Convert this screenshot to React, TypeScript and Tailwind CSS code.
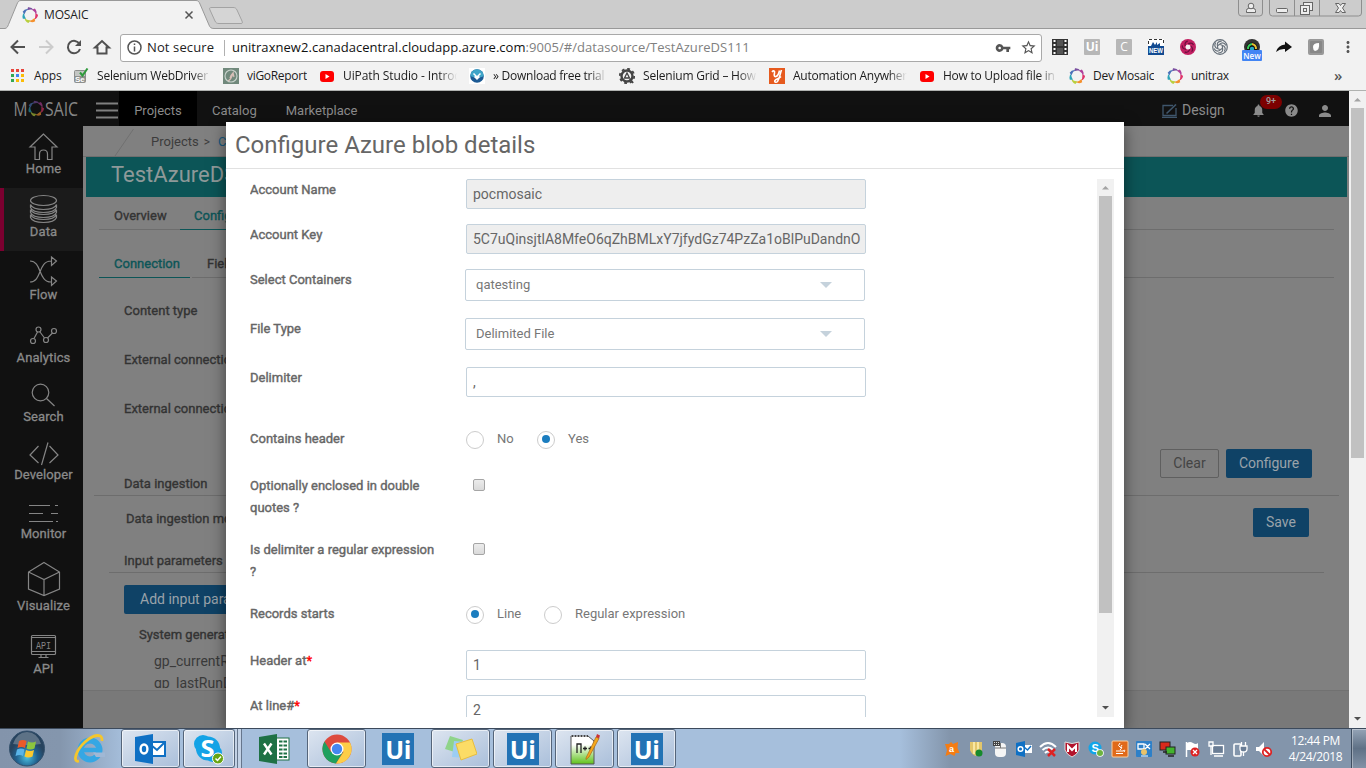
import React from "react";
import { MdNotifications, MdHelp, MdPerson, MdVpnKey, MdStarBorder, MdMoreVert } from "react-icons/md";

const SEGOE = "font-['Open_Sans','Noto_Sans',sans-serif]";

function Ring({ size = 16, className = "" }: { size?: number; className?: string }) {
  const colors = ["#7a4fa0", "#b0409a", "#e0356a", "#f5912e", "#b8cf3c", "#2ba3b8", "#4a70b8"];
  return (
    <svg width={size} height={size} viewBox="0 0 16 16" className={className}>
      {colors.map((c, i) => (
        <path key={c} d="M6 .2Q9.800-.2 11.600 3 9 1.900 5.200 3.200z" fill={c} transform={`rotate(${i * 51.4} 8 8)`} />
      ))}
    </svg>
  );
}

function YouTube() {
  return (
    <svg width="16" height="16" viewBox="0 0 16 16">
      <rect x="1" y="3" width="14" height="11" rx="3" fill="#f00" />
      <path d="M6.5 6v5l4-2.5z" fill="#fff" />
    </svg>
  );
}

function AppsIcon() {
  const c = ["#e8453c", "#e8453c", "#e8453c", "#34a853", "#4285f4", "#fbbc05", "#34a853", "#fbbc05", "#fbbc05"];
  return (
    <svg width="16" height="16" viewBox="0 0 16 16">
      {c.map((f, i) => (
        <rect key={i} x={1 + (i % 3) * 5} y={1 + Math.floor(i / 3) * 5} width="3" height="3" fill={f} />
      ))}
    </svg>
  );
}

function SeIcon() {
  return (
    <svg width="16" height="16" viewBox="0 0 16 16">
      <rect x="1" y="2" width="12" height="13" rx="2" fill="#8d8f8d" />
      <rect x="2" y="3" width="10" height="5" fill="#c4c6c4" />
      <text x="2" y="13.5" fontSize="8" fontWeight="bold" fill="#fff" fontFamily="Liberation Sans">Se</text>
      <path d="M7 4.500l2.500 3L14.500.5" fill="none" stroke="#2f9a3c" strokeWidth="2" />
    </svg>
  );
}

function ViGo() {
  return (
    <svg width="16" height="16" viewBox="0 0 16 16">
      <rect width="16" height="16" fill="#71897c" />
      <circle cx="8" cy="8" r="6" fill="none" stroke="#c8d2cc" strokeWidth="1.1" />
      <path d="M5 13c2-1 4-4 5-8-2 2-3 3-3 5M10 5l1 4" fill="none" stroke="#d8c0b8" strokeWidth="1.2" />
    </svg>
  );
}

function DownloadIcon() {
  return (
    <svg width="16" height="16" viewBox="0 0 16 16">
      <rect width="16" height="16" fill="#fff" />
      <circle cx="8" cy="8" r="6.8" fill="#1c5a94" />
      <path d="M1.2 8a6.8 6.8 0 0 1 13.6 0c-4 2-9 2-13.6 0z" fill="#3fa5c8" />
      <path d="M4.5 5.500L8 9l3.500-3.500M5.500 8.500L8 11l2.500-2.500" fill="none" stroke="#fff" strokeWidth="1.500" />
    </svg>
  );
}

function GearIcon() {
  return (
    <svg width="16" height="16" viewBox="0 0 16 16">
      <circle cx="8" cy="8" r="5.500" fill="none" stroke="#444" strokeWidth="2.400" />
      <circle cx="8" cy="8" r="7.200" fill="none" stroke="#444" strokeWidth="1.800" strokeDasharray="2.800 2.850" />
      <path d="M5.500 10L8 5l2.500 5z" fill="none" stroke="#444" strokeWidth="1.300" />
      <path d="M11 11l3 4" stroke="#444" strokeWidth="2" />
    </svg>
  );
}

function YIcon() {
  return (
    <svg width="16" height="16" viewBox="0 0 16 16">
      <rect width="16" height="16" fill="#e65a1e" />
      <path d="M3 4c1.500-2 3-1 2.500 1S5 9 7 8.500 10 5 10.500 2.500M12.500 2C11 6 10.500 11 8.500 13.500 7 15 5 14 6 12.500s4-2 6-4" fill="none" stroke="#fff" strokeWidth="1.600" />
    </svg>
  );
}

function Bookmark({ w, icon, label, fade, tracking = "tracking-[-0.1px]" }: { w: string; icon: React.ReactNode; label: string; fade?: boolean; tracking?: string }) {
  return (
    <div className={`flex h-4 shrink-0 items-center gap-2 ${w}`}>
      {icon}
      <span
        className={`overflow-hidden whitespace-nowrap text-[12px] leading-4 text-[#1c1c1c] ${tracking} ${
          fade ? "w-[114px] [mask-image:linear-gradient(to_right,black_84%,transparent_100%)]" : ""
        }`}
      >
        {label}
      </span>
    </div>
  );
}

function BrowserChrome() {
  return (
    <header className={`h-[91px] shrink-0 border-b border-[#b0b2b0] bg-[#f2f2f2] ${SEGOE}`}>
      <div className="relative flex h-[29px] justify-between bg-[#ccc]">
        <svg width="260" height="29" viewBox="0 0 260 29" className="shrink-0">
          <path d="M0 28.500H5C7 28 7.500 27 8.500 24.500L17 4C18 1.500 19 .5 21 .5H196C198 .5 199 1.500 200 4L209 25C210 27.500 211 28.500 214 28.500H260V29.500H0z" fill="#f2f2f2" stroke="#999" />
          <path d="M212 7.500H233C235 7.500 236 8 237 10L242 21C242.700 23 242.500 23.500 241 23.500H219C217 23.500 216 23 215 21L210 10C209 8 209.500 7.500 212 7.500z" fill="#d5d5d5" stroke="#a3a3a3" />
          <path d="M185.500 11.500l7 7M192.500 11.500l-7 7" stroke="#555" strokeWidth="1.500" />
        </svg>
        <div className="absolute left-[22px] top-[7px] flex items-center gap-[6px]">
          <Ring />
          <span className="text-[12px] leading-4 tracking-[-0.15px] text-[#222]">MOSAIC</span>
        </div>
        <div className="grow border-b border-[#999]" />
        <div className="flex w-[130px] border-b border-[#999]">
          <svg width="130" height="18" viewBox="0 0 130 18" fill="none" stroke="#8e8e8e">
            <path d="M2.500 0V13q0 3 3 3H23.500q3 0 3-3V0M33.500 0V13q0 3 3 3H122.500q3 0 3-3V0M58.500 0V16M83.500 0V16" />
            <g stroke="#666" fill="#ededed">
              <path d="M10.500 12.500v-2q0-2 2-2h5q2 0 2 2v2z" />
              <circle cx="15" cy="6" r="2.800" />
              <rect x="40.500" y="8.500" width="11" height="4" rx="1" />
              <rect x="67.500" y="2.500" width="9" height="8" />
              <rect x="64.500" y="5.500" width="9" height="9" />
              <rect x="67.500" y="8.500" width="3" height="3" />
              <path d="M99.500 3.500h3.500l1.500 2 1.500-2h3.500l-3 4.500 3 4.500h-3.500l-1.500-2-1.500 2h-3.500l3-4.500z" />
            </g>
          </svg>
        </div>
      </div>
      <div className="flex h-[36px] items-center pt-1">
        <svg width="120" height="28" viewBox="0 0 120 28" className="-mt-1 shrink-0" fill="none" stroke="#505050" strokeWidth="2">
          <path d="M25 14H12M18 7.500L11.500 14l6.500 6.500" />
          <path d="M39 14h13M46 7.500l6.500 6.500-6.500 6.500" stroke="#ccc" />
          <path d="M79.500 11A6.200 6.200 0 1 0 80 16" />
          <path d="M81 7v6h-6z" fill="#505050" stroke="none" />
          <path d="M95 14.500L102 8l7 6.500h-2.500V20.500h-9V14.500z" />
        </svg>
        <div className="-mt-[3px] flex h-7 w-[922px] shrink-0 items-center rounded-[3px] border border-[#a9a9a9] bg-white pl-[6px] text-[13px]">
          <svg width="15" height="15" viewBox="0 0 15 15" fill="none" stroke="#555" strokeWidth="1.500">
            <circle cx="7.500" cy="7.500" r="6.500" />
            <path d="M7.500 6.500v5M7.500 3.500v1.600" />
          </svg>
          <span className="ml-[5px] w-[77px] whitespace-nowrap text-[13px] tracking-[0.12px] text-[#222]">Not secure</span>
          <span className="h-4 w-px bg-[#b0b0b0]" />
          <span className="ml-[7px] grow whitespace-nowrap text-[13px] tracking-[0.04px] text-[#808080]">
            <span className="text-[#111]">unitraxnew2.canadacentral.cloudapp.azure.com</span>:9005/#/datasource/TestAzureDS111
          </span>
          <MdVpnKey size={16} className="mr-[9px] text-[#555]" />
          <MdStarBorder size={17} className="mr-[4px] text-[#555]" />
        </div>
        <div className="-mt-[3px] ml-[10px] flex gap-4">
          <svg width="16" height="16" viewBox="0 0 16 16">
            <rect width="16" height="16" fill="#333" />
            <rect x="5" y="1" width="6" height="6" fill="#555" /><rect x="5" y="9" width="6" height="6" fill="#555" />
            <path d="M2.500 1v15M13.500 1v15" stroke="#fff" strokeWidth="2" strokeDasharray="2 2" />
          </svg>
          <div className="flex size-4 items-center justify-center rounded-[1px] bg-[#b7b7b7] text-[12px] font-bold leading-4 text-white">Ui</div>
          <div className="flex size-4 items-center justify-center rounded-[1px] bg-[#b7b7b7] text-[12px] leading-4 text-white">C</div>
          <svg width="16" height="16" viewBox="0 0 16 16">
            <rect width="16" height="16" fill="#fff" />
            <path d="M.5 5V.5H15.500V5" fill="none" stroke="#333" strokeDasharray="3 2" />
            <path d="M0 7h3l2-4 2 3 2-3v3l3-2v3h4v9H0z" fill="#124a91" />
            <text x="1" y="14" fontSize="7" fontWeight="bold" fill="#fff" fontFamily="Liberation Sans" textLength="14" lengthAdjust="spacingAndGlyphs">NEW</text>
          </svg>
          <svg width="16" height="16" viewBox="0 0 16 16">
            <circle cx="8" cy="8" r="8" fill="#c22062" />
            <circle cx="8" cy="8" r="2.500" fill="#f2f2f2" />
            {[0, 72, 144, 216, 288].map((a) => <path key={a} d="M8 5Q12 3 13.500 6" fill="none" stroke="#6e1040" strokeWidth="1.200" transform={`rotate(${a} 8 8)`} />)}
          </svg>
          <svg width="16" height="16" viewBox="0 0 16 16" fill="none" stroke="#66707a" strokeWidth="1.200">
            <circle cx="8" cy="8" r="7.300" />
            {[0, 60, 120, 180, 240, 300].map((a) => <path key={a} d="M6 6.500L9 4.300Q12 3 14 6.500" transform={`rotate(${a} 8 8)`} />)}
          </svg>
          <div className="relative size-4">
            <svg width="16" height="16" viewBox="0 0 16 16">
              <circle cx="8" cy="8" r="8" fill="#333" />
              <circle cx="8" cy="9" r="5.500" fill="#111" />
              <path d="M4 10a4.500 4.500 0 0 1 4-5" stroke="#3ad05a" strokeWidth="2" fill="none" />
              <path d="M8 5a4.500 4.500 0 0 1 4 5" stroke="#e8c030" strokeWidth="2" fill="none" />
              <circle cx="8" cy="10" r="2.200" fill="#20a8c8" />
            </svg>
            <span className="absolute left-[-2px] top-[11px] flex h-[11px] w-5 items-center justify-center rounded-[1px] bg-[#4285f4] text-[8px] font-semibold text-white">New</span>
          </div>
          <svg width="16" height="16" viewBox="0 0 16 16"><path d="M0 13Q2 6 9 5.500V2.500L16 8l-7 5V10Q4 9.500 0 13z" fill="#111" /></svg>
          <svg width="16" height="16" viewBox="0 0 16 16">
            <rect width="16" height="16" rx="2" fill="#999" />
            <rect x="2" y="2" width="12" height="12" rx="1" fill="#888" />
            <path d="M5 8q0-4 6-4 1 7-4 8-2-1-2-4z" fill="#fff" />
          </svg>
          <MdMoreVert size={18} className="-ml-px -mt-px text-[#555]" />
        </div>
      </div>
      <div className="flex h-[22px] items-center pl-[10px]">
        <Bookmark w="w-[63px]" icon={<AppsIcon />} label="Apps" />
        <Bookmark w="w-[150px]" icon={<SeIcon />} label="Selenium WebDriver" fade tracking="tracking-[-0.2px]" />
        <Bookmark w="w-[96px]" icon={<ViGo />} label="viGoReport" tracking="tracking-[-0.3px]" />
        <Bookmark w="w-[150px]" icon={<YouTube />} label="UiPath Studio - Introd" fade tracking="tracking-[-0.1px]" />
        <Bookmark w="w-[150px]" icon={<DownloadIcon />} label="» Download free trial" fade tracking="tracking-[-0.25px]" />
        <Bookmark w="w-[150px]" icon={<GearIcon />} label="Selenium Grid – How" fade tracking="tracking-[-0.2px]" />
        <Bookmark w="w-[150px]" icon={<YIcon />} label="Automation Anywher" fade tracking="tracking-[-0.25px]" />
        <Bookmark w="w-[150px]" icon={<YouTube />} label="How to Upload file in" fade tracking="tracking-[-0.25px]" />
        <Bookmark w="w-[98px]" icon={<Ring />} label="Dev Mosaic" tracking="tracking-[-0.25px]" />
        <Bookmark w="w-[167px]" icon={<Ring />} label="unitrax" tracking="tracking-[-0.3px]" />
        <span className="-mt-[3px] text-[15px] font-semibold leading-4 text-[#555]">»</span>
      </div>
    </header>
  );
}

function TopBar() {
  return (
    <div className="flex h-[35px] items-stretch bg-[#111] text-[13px] text-[#8b8b8b]">
      <svg width="119" height="35" viewBox="0 0 119 35" className="shrink-0">
        <g fill="#858585" fontFamily="Open Sans" fontSize="20">
          <text x="13.500" y="25" textLength="14" lengthAdjust="spacingAndGlyphs">M</text>
          <text x="45" y="25" textLength="33" lengthAdjust="spacingAndGlyphs">SAIC</text>
        </g>
        <svg x="28" y="9.500" width="16" height="17" opacity=".6"><Ring /></svg>
        <path d="M96 12.500h22M96 19.500h22M96 26.500h22" stroke="#808080" strokeWidth="2" />
      </svg>
      <div className="flex w-[78px] items-center justify-center bg-black pt-1">Projects</div>
      <div className="ml-[15px] flex items-center pt-1">Catalog</div>
      <div className="ml-[29px] flex items-center pt-1">Marketplace</div>
      <div className="ml-auto flex items-center pr-[15px] pt-1">
        <svg width="15" height="14" viewBox="0 0 15 14" fill="none" stroke="#3f566c" strokeWidth="1.300">
          <path d="M11 1.500H1v10h13V4M0 13.300h15" /><path d="M4.500 9.500L14 .5" strokeWidth="1.600" />
        </svg>
        <span className="ml-[5px] w-[43px] text-[14px]">Design</span>
        <div className="relative ml-[26px] w-[15px]">
          <MdNotifications size={15} />
          <span className="absolute left-[9px] top-[-8px] flex h-[14px] w-[22px] items-center justify-center rounded-full bg-[#7c0000] text-[9px] font-medium text-[#a0a0a0]">9+</span>
        </div>
        <MdHelp size={15} className="ml-[18px]" />
        <MdPerson size={18} className="ml-[17px]" />
      </div>
    </div>
  );
}

const nav: { label: string; h: string; icon: React.ReactNode; active?: boolean }[] = [
  { label: "Home", h: "h-[62px]", icon: <path d="M43.500 8L30 21h5v12.500h4.500V28q0-4 4-4t4 4v5.500H52V21h5z" /> },
  {
    label: "Data", h: "h-[63px]", active: true,
    icon: (<><ellipse cx="43.500" cy="12.500" rx="13" ry="5" /><path d="M30.500 16.500v3q2 5 13 5t13-5v-3q-2 5-13 5t-13-5zM30.500 21.500v3q2 5 13 5t13-5v-3q-2 5-13 5t-13-5zM30.500 26.500v3q2 5 13 5t13-5v-3q-2 5-13 5t-13-5z" /></>),
  },
  { label: "Flow", h: "h-[63px]", icon: <path d="M30 10c12 0 8 21 21 21M30 31c12 0 8-21 21-21M51.500 6v8.500l5-4.500zM51.500 26v8.500l5-4.500z" /> },
  {
    label: "Analytics", h: "h-[63px]",
    icon: (<><circle cx="33" cy="27" r="2.500" /><circle cx="38.500" cy="15.500" r="2.500" /><circle cx="46" cy="26" r="2.500" /><circle cx="54" cy="17" r="2.500" /><path d="M34 24.500l3.500-6.500M40 18l4.500 6M47.500 24l5-5" /></>),
  },
  { label: "Search", h: "h-[57px]", icon: (<><circle cx="40.500" cy="15.500" r="8.300" /><path d="M46.500 21.500l8 7.500" /></>) },
  { label: "Developer", h: "h-[60px]", icon: <path d="M38.500 12L30 21l8.500 8M49.500 12l8.500 9-8.500 8M48 8.500l-6.500 22.500" /> },
  { label: "Monitor", h: "h-[57px]", icon: <path d="M29 11.500h21M55 11.500h3M29 19.500h14M51 19.500h7M29 27.500h24M56 27.500h2" /> },
  { label: "Visualize", h: "h-[74px]", icon: <path d="M44 11.500L59.500 21v17L44 44.500 28.500 38V21zM28.500 21L44 28.500 59.500 21M44 28.500v16" /> },
  {
    label: "API", h: "h-[63px]",
    icon: (<><rect x="31.500" y="10.500" width="24" height="19" rx="1" /><path d="M31.500 12.500h24M31.500 26.500h24M41 30v2.500M46 30v2.500M38.500 32.500h10" /><text x="36" y="24" fontSize="10" fontFamily="Liberation Mono" fill="#858585" stroke="none" textLength="15" lengthAdjust="spacingAndGlyphs">API</text></>),
  },
];

function Sidebar() {
  return (
    <nav className="w-[83px] shrink-0 bg-[#111]">
      {nav.map((n) => (
        <div key={n.label} className={`flex flex-col items-center justify-between pb-[9px] ${n.h} ${n.active ? "bg-[#1b1b1b] shadow-[inset_4px_0_0_#7c0030]" : ""}`}>
          <svg width="83" height="30" viewBox="0 0 83 30" className="overflow-visible" fill="none" stroke="#858585" strokeWidth="1.200">{n.icon}</svg>
          <span className="-mr-[4px] text-[13px] leading-5 tracking-[0.1px] text-[#8a8a8a] [-webkit-text-stroke:0.3px]">{n.label}</span>
        </div>
      ))}
    </nav>
  );
}

const strong = "[-webkit-text-stroke:0.35px] whitespace-nowrap text-[13px]";

function Page() {
  return (
    <main className="flex h-[602px] grow flex-col overflow-hidden bg-[#797979] text-[#333]">
      <section className="h-[565px] overflow-hidden border-b border-[#717171] bg-[#808080]">
        <div className="flex h-[31px] items-center border-b border-[#6e6e6e]">
          <svg width="68" height="30" viewBox="0 0 68 30"><path d="M32 30L50.500 3" stroke="#707070" /></svg>
          <span className="mt-px text-[13px] text-[#3c3c3c]">Projects</span>
          <span className="ml-[5px] mt-px text-[12px] text-[#3c3c3c]">&gt;</span>
          <span className="ml-2 mt-px text-[13px] text-[#17597f]">Ca</span>
        </div>
        <div className="mx-[3px] mr-[2px] flex h-10 items-center bg-[#0c5557] pb-[5px] pl-[25px] text-[22px] text-[#8e9999]">TestAzureDS</div>
        <div className="ml-4 mr-[15px] flex h-[33px] border-b border-[#6d6d6d] pt-[9px]">
          <span className={`w-[81px] pl-[15px] ${strong}`}>Overview</span>
          <span className={`h-6 w-[110px] border-b border-[#0c5557] pl-[14px] text-[#0c5557] ${strong}`}>Configuration</span>
        </div>
        <div className="ml-4 mr-[15px] flex h-12 items-end gap-[2px]">
          <span className={`h-6 w-[91px] border-b border-[#0c5557] pl-[15px] text-[#0c5557] ${strong}`}>Connection</span>
          <span className={`h-6 grow border-b border-[#6d6d6d] pl-[15px] ${strong}`}>Fields</span>
        </div>
        <div className="flex h-[218px] justify-between border-b border-transparent pl-[41px] pr-[37px]">
          <div className={`flex flex-col pt-[23px] leading-5 ${strong}`}>
            <span className="h-[49px]">Content type</span>
            <span className="h-[49px]">External connection</span>
            <span className="h-[75px]">External connection</span>
            <span>Data ingestion</span>
          </div>
          <div className="flex gap-[7px] self-end pb-[17px] text-[14px]">
            <div className="flex h-[29px] w-[59px] items-center justify-center rounded-[2px] border border-[#5f5f5f] text-[#444]">Clear</div>
            <div className="flex h-[29px] w-[86px] items-center justify-center rounded-[2px] bg-[#0f4266] text-[#9aa3aa]">Configure</div>
          </div>
        </div>
        <div className="ml-[11px] mr-[10px] -mt-px flex h-[61px] justify-between border-t border-[#6d6d6d] pl-8 pr-[30px] pt-[12px]">
          <span className={`mt-px leading-5 ${strong}`}>Data ingestion mode</span>
          <div className="flex h-[29px] w-14 items-center justify-center rounded-[2px] bg-[#0f4266] text-[14px] text-[#9aa3aa]">Save</div>
        </div>
        <div className="ml-[26px] mr-[25px] h-[17px] border-b border-[#6d6d6d] pl-[15px]">
          <span className={`block -translate-y-[5px] leading-5 ${strong}`}>Input parameters</span>
        </div>
        <div className="ml-[41px] mt-3 flex h-[29px] w-[160px] items-center rounded-[2px] bg-[#0f4266] pl-4 text-[14px] text-[#9aa3aa]">Add input parameter</div>
        <div className={`ml-[56px] mt-[11px] leading-5 ${strong}`}>System generated</div>
        <div className="ml-[71px] mt-[5px] h-[38px] overflow-hidden text-[14px] leading-[22px] text-[#3a3a3a]">
          <div>gp_currentRun</div>
          <div>gp_lastRunDate</div>
        </div>
      </section>
    </main>
  );
}

function ScrollTrack({ thumb, className }: { thumb: string; className: string }) {
  return (
    <div className={`flex w-[17px] shrink-0 flex-col items-center bg-[#f1f1f1] ${className}`}>
      <svg width="17" height="17" viewBox="0 0 17 17" className="shrink-0"><path d="M5 10.500h7L8.500 7z" fill="#a3a3a3" /></svg>
      <div className={`w-[13px] bg-[#c1c1c1] ${thumb}`} />
      <svg width="17" height="17" viewBox="0 0 17 17" className="mt-auto shrink-0"><path d="M5 6h7l-3.500 3.500z" fill="#505050" /></svg>
    </div>
  );
}

function Row({ h, label, required, children }: { h: string; label: string; required?: boolean; children: React.ReactNode }) {
  return (
    <div className={`flex shrink-0 items-start ${h}`}>
      <div className="w-[216px] shrink-0 pr-6 text-[13px] leading-[22px] text-[#666] [-webkit-text-stroke:0.4px]">
        {label}
        {required && <span className="text-[#f00]">*</span>}
      </div>
      {children}
    </div>
  );
}

function Field({ value, disabled }: { value: string; disabled?: boolean }) {
  return (
    <div className={`flex h-[30px] w-[400px] items-center overflow-hidden whitespace-nowrap rounded-[2px] border border-[#c5d2dc] px-[6px] text-[14px] text-[#666] ${disabled ? "bg-[#eee]" : "bg-white"}`}>
      {value}
    </div>
  );
}

function Select({ value }: { value: string }) {
  return (
    <div className="-ml-px flex h-8 w-[400px] items-center justify-between rounded-[2px] border border-[#c5d2dc] pl-[10px] pr-[32px] text-[13px] text-[#777]">
      {value}
      <svg width="12" height="6" viewBox="0 0 12 6"><path d="M0 0h12L6 6z" fill="#c5d2dc" /></svg>
    </div>
  );
}

function Radio({ label, on, w }: { label: string; on?: boolean; w: string }) {
  return (
    <div className={`flex items-start gap-[13px] whitespace-nowrap ${w}`}>
      <div className="mt-[3px] flex size-[18px] shrink-0 items-center justify-center rounded-full border border-[#ccc]">
        {on && <div className="mb-[2px] mr-px size-[8px] rounded-full bg-[#1b7dbf]" />}
      </div>
      <span className="text-[13px] leading-[22px] text-[#777]">{label}</span>
    </div>
  );
}

function Check() {
  return <div className="ml-[7px] mt-1 size-3 rounded-[2px] border border-[#a5a5a5] bg-linear-to-b from-[#ececec] to-[#dadada]" />;
}

function Dialog() {
  return (
    <div className="absolute left-[226px] top-[31px] flex h-[606px] w-[898px] flex-col bg-white shadow-[0_5px_15px_rgba(0,0,0,0.5)]">
      <h1 className="flex h-[47px] shrink-0 items-center border-b border-[#e1e1e1] pl-[9px] text-[24px] text-[#666]">Configure Azure blob details</h1>
      <div className="mt-[10px] flex h-[538px] justify-between overflow-hidden pl-6 pr-[10px]">
        <div className="flex flex-col overflow-hidden">
          <Row h="h-[45px]" label="Account Name"><Field value="pocmosaic" disabled /></Row>
          <Row h="h-[45px]" label="Account Key"><Field value="5C7uQinsjtlA8MfeO6qZhBMLxY7jfydGz74PzZa1oBlPuDandnO" disabled /></Row>
          <Row h="h-[49px]" label="Select Containers"><Select value="qatesting" /></Row>
          <Row h="h-[49px]" label="File Type"><Select value="Delimited File" /></Row>
          <Row h="h-[61px]" label="Delimiter"><Field value="," /></Row>
          <Row h="h-[47px]" label="Contains header"><Radio w="w-[71px]" label="No" /><Radio w="" label="Yes" on /></Row>
          <Row h="h-[64px]" label="Optionally enclosed in double quotes ?"><Check /></Row>
          <Row h="h-[64px]" label="Is delimiter a regular expression ?"><Check /></Row>
          <Row h="h-[47px]" label="Records starts"><Radio w="w-[78px]" label="Line" on /><Radio w="" label="Regular expression" /></Row>
          <Row h="h-[45px]" label="Header at" required><Field value="1" /></Row>
          <Row h="h-[45px]" label="At line#" required><Field value="2" /></Row>
        </div>
        <ScrollTrack className="h-[538px]" thumb="h-[417px]" />
      </div>
    </div>
  );
}

function UiTile() {
  return <div className="flex size-8 items-center justify-center bg-[#2373b5] text-[25px] font-bold leading-8 tracking-[-0.5px] text-white">Ui</div>;
}

function TaskButton({ w = "w-[59px]", ml, children }: { w?: string; ml: string; children: React.ReactNode }) {
  return (
    <div className={`flex h-[39px] shrink-0 items-center justify-center rounded-[3px] border border-[#55657a] bg-linear-to-br from-[#dde5f0] to-[#aabfda] shadow-[inset_0_0_0_1px_rgba(255,255,255,0.6)] ${w} ${ml}`}>
      {children}
    </div>
  );
}

function Tray() {
  const red = "#d22";
  const icons: React.ReactNode[] = [
    <><path d="M1 3l4 0 2-2 2 2 5-2-.5 6 2 5-4 0-1 3-4-2-5 2 1.500-6z" fill="#f57c12" /><text x="5" y="11" fontSize="9" fontWeight="bold" fill="#fff" fontFamily="Liberation Sans">a</text></>,
    <><path d="M2 1h12v8q-2 5-6 6-4-1-6-6z" fill="#e3c66b" /><path d="M6 1v12M10 1v12" stroke="#fff2b8" strokeWidth="1.500" /><circle cx="11" cy="12" r="3.500" fill="#168a2c" /></>,
    <><rect x="3" y="2" width="11" height="14" rx="4" fill="#f5f5f5" /><path d="M3 7h11M8.500 2v5" stroke="#777" /><rect x="1" y="0" width="7" height="5" fill="#444" /><path d="M2 1.500h5M2 3.500h5" stroke="#ddd" strokeDasharray="1 1" /></>,
    <><rect x="7" y="4" width="9" height="8" fill="#fff" /><path d="M8 6l3.500 3L15 5" stroke="#1071c6" fill="none" strokeWidth="1.500" /><path d="M0 2l9-2v16l-9-2z" fill="#0f70c4" /><circle cx="4.500" cy="8" r="2.300" fill="none" stroke="#fff" strokeWidth="1.500" /></>,
    <><path d="M0 6q8-8 16 0M2.500 9q5.500-5 11 0M5 12q3-3 6 0" stroke="#fff" strokeWidth="2" fill="none" /><path d="M8 8l7 7M15 8l-7 7" stroke={red} strokeWidth="2.500" /></>,
    <><path d="M1 1q7 3 14 0v8q-2 5-7 7-5-2-7-7z" fill="#b3132b" stroke="#ddd" /><path d="M4 11V5l4 4 4-4v6" stroke="#fff" strokeWidth="2" fill="none" /></>,
    <><circle cx="7" cy="7" r="6.500" fill="#12a5e8" /><text x="3.500" y="11" fontSize="11" fontWeight="bold" fill="#fff" fontFamily="Liberation Sans">S</text><circle cx="12" cy="12" r="3.800" fill="#fff" /><circle cx="12" cy="12" r="3" fill="#6cb33e" /></>,
    <><rect width="16" height="16" rx="1" fill="#e06a1a" stroke="#fbd0a0" /><path d="M8 2q-3 3 0 4t0 3M10 4q-2 2 0 3M4 10h7q3-2 1 1M4 12.500h7" stroke="#fff" fill="none" /></>,
    <><rect width="16" height="16" rx="1" fill="#2d80c8" /><path d="M2 3h6v5H2zM9 3l5 5M14 3L9 8" stroke="#fff" fill="none" strokeWidth="1.300" /><circle cx="8" cy="11" r="3" fill="#e9c36a" /><path d="M5 15h7" stroke="#fff" /></>,
    <><rect x="0" y="1" width="10" height="8" fill="#d92a1c" stroke="#222" /><rect x="6" y="6" width="9" height="7" fill="#43b32e" stroke="#222" /><path d="M3 11h4M8 15h6" stroke="#222" strokeWidth="1.500" /></>,
    <><path d="M2.500 1v15" stroke="#fff" strokeWidth="1.500" /><path d="M3 2q3-2 6 0t5 0v7H3z" fill="#fff" /><circle cx="11" cy="11" r="4.500" fill={red} /><path d="M9 9l4 4M13 9l-4 4" stroke="#fff" strokeWidth="1.300" /></>,
    <><rect x="4.500" y="4.500" width="11" height="8" fill="#6a7d95" stroke="#fff" strokeWidth="1.300" /><path d="M1 1h4v4H1zM3 5v9M6 15h9" stroke="#fff" fill="none" strokeWidth="1.300" /></>,
    <><rect x="2" y="3" width="7" height="12" rx="1" fill="none" stroke="#fff" strokeWidth="1.600" /><path d="M8 5h7v3q0 3-3.500 3T8 8zM9.500 1v4M13.500 1v4M11.500 11v4" stroke="#fff" fill="#6a7d95" strokeWidth="1.300" /></>,
    <><path d="M0 6h3l5-5v14l-5-5H0z" fill="#fff" /><circle cx="11" cy="11" r="4.200" fill="#fff" stroke={red} strokeWidth="1.800" /><path d="M8 8l6 6" stroke={red} strokeWidth="1.800" /></>,
  ];
  return (
    <div className="flex gap-2">
      {icons.map((ic, i) => (
        <svg key={i} width="16" height="16" viewBox="0 0 16 16" className="overflow-visible">{ic}</svg>
      ))}
    </div>
  );
}

function Taskbar() {
  return (
    <footer className={`flex h-10 shrink-0 items-center border-t border-[#3c4a5c] bg-[linear-gradient(to_right,#8394ab_0,#8496ad_60px,#a6bfdc_125px,#a6bfdc_900px,#8395ab_950px,#8395ab_100%)] ${SEGOE}`}>
      <svg width="37" height="38" viewBox="0 0 37 38" className="ml-[9px] shrink-0">
        <defs><radialGradient id="orb" cy=".75"><stop offset="0" stopColor="#4cc0e0" /><stop offset=".6" stopColor="#21618f" /><stop offset="1" stopColor="#27435e" /></radialGradient></defs>
        <circle cx="18" cy="18.500" r="17.500" fill="url(#orb)" stroke="#33506c" />
        <path d="M4 14q4-12 14-12t14 12Q18 16 4 14z" fill="#fff" opacity=".25" />
        <path d="M10 11q4-2 7.500 0L16 18q-3.500-2-7.500 0z" fill="#ea5a2a" />
        <path d="M19 11.500q4 2 8 0L25.500 18.500q-4 2-8 0z" fill="#8cc63e" />
        <path d="M8 19.500q4-2 7.500 0L14 26q-3-2-7.500 0z" fill="#5ab4e8" />
        <path d="M17 20q4 2 8 0L23.500 26.500q-4 2-8 0z" fill="#fcc92e" />
      </svg>
      <svg width="32" height="32" viewBox="0 0 32 32" className="ml-[27px] shrink-0">
        <circle cx="17" cy="17" r="9.500" fill="none" stroke="#35a7e4" strokeWidth="6" />
        <path d="M9 17h18" stroke="#35a7e4" strokeWidth="4.500" />
        <path d="M20 19.500h12v4.500h-9z" fill="#a0b8d5" />
        <path d="M6 28C-1 30 3 17 12 9S30 0 29 8" fill="none" stroke="#f5c62c" strokeWidth="2.800" />
      </svg>
      <TaskButton ml="ml-[16px]">
        <svg width="31" height="32" viewBox="0 0 31 32">
          <path d="M14 9h16v14H14z" fill="#fff" stroke="#0f70c4" strokeWidth="2" /><path d="M16 12l6 5 8-8" fill="none" stroke="#0f70c4" strokeWidth="2" />
          <path d="M0 4l18-3v30L0 28z" fill="#0f70c4" /><ellipse cx="9" cy="16" rx="3.400" ry="4.500" fill="none" stroke="#fff" strokeWidth="2.400" />
        </svg>
      </TaskButton>
      <TaskButton ml="ml-[3px]" w="w-[52px]">
        <svg width="32" height="32" viewBox="0 0 32 32">
          <circle cx="10" cy="11" r="9" fill="#14a3e6" /><circle cx="20" cy="20" r="9" fill="#14a3e6" /><circle cx="15" cy="15.500" r="12" fill="#14a3e6" />
          <text x="7.500" y="24" fontSize="24" fontWeight="bold" fill="#fff" fontFamily="Open Sans" textLength="14" lengthAdjust="spacingAndGlyphs">S</text>
          <circle cx="25" cy="25.500" r="5.500" fill="#68a515" stroke="#fff" /><path d="M22.500 25.500l2 2 3.500-4" fill="none" stroke="#fff" strokeWidth="1.500" />
        </svg>
      </TaskButton>
      <div className="h-[39px] w-[3px] border-r border-[#66768c] bg-[#c3d2e6]" />
      <div className="h-[39px] w-[4px] border-r border-[#66768c] bg-[#c3d2e6]" />
      <svg width="31" height="30" viewBox="0 0 31 30" className="ml-[17px] shrink-0">
        <rect x="14" y="4" width="16" height="22" fill="#fff" stroke="#1e7145" />
        <path d="M20 7.500h8M20 11.500h8M20 15.500h8M20 19.500h8M20 23h8" stroke="#1e7145" strokeWidth="2" strokeDasharray="3.500 1" />
        <path d="M0 3l18-3v30L0 27z" fill="#1e7145" /><path d="M5 9.500l7.500 11M12.500 9.500L5 20.500" stroke="#fff" strokeWidth="2.400" />
      </svg>
      <TaskButton ml="ml-[17px]">
        <svg width="30" height="30" viewBox="0 0 30 30">
          <circle cx="15" cy="15" r="14.500" fill="#dd4b3e" />
          <path d="M2.500 7.500A14.500 14.500 0 0 0 14 29.500L21 18 9 18z" fill="#1fa05e" />
          <path d="M15 8.500h13A14.500 14.500 0 0 1 14 29.500L21.500 18z" fill="#fdce48" />
          <circle cx="15" cy="15" r="6.500" fill="#fff" /><circle cx="15" cy="15" r="5.200" fill="#4587f0" />
        </svg>
      </TaskButton>
      <div className="ml-[16px]"><UiTile /></div>
      <TaskButton ml="ml-[17px]">
        <svg width="32" height="28" viewBox="0 0 32 28">
          <path d="M5 1l13 4-5 13-13-4z" fill="#8fd48a" /><path d="M9 6l12 1-1 16-13-1z" fill="#9ccdf4" /><path d="M11 9l16-5 5 15-16 6z" fill="#fbdc66" stroke="#e8bd3d" />
        </svg>
      </TaskButton>
      <TaskButton ml="ml-[3px]"><UiTile /></TaskButton>
      <TaskButton ml="ml-[3px]">
        <svg width="30" height="32" viewBox="0 0 30 32">
          <defs><linearGradient id="np" x2="0" y2="1"><stop offset=".3" stopColor="#fff" /><stop offset="1" stopColor="#5fc21a" /></linearGradient></defs>
          <path d="M1 3h17l6 5v23H1z" fill="url(#np)" stroke="#555" />
          <path d="M2 3h17" stroke="#444" strokeWidth="2" strokeDasharray="1 2" />
          <path d="M7 20v-9h4v9M13 15.500h4M15 13.500v4M18.500 15.500h4M20.500 13.500v4" fill="none" stroke="#222" strokeWidth="1.300" />
          <path d="M16 25l10-21 3 1.500L19 24l-3 2.500z" fill="#f5a81c" stroke="#a5651a" strokeWidth=".7" /><path d="M26 4l1-3 3 1.500-1 3z" fill="#c33" />
        </svg>
      </TaskButton>
      <TaskButton ml="ml-[3px]"><UiTile /></TaskButton>
      <div className="ml-auto flex h-full items-center">
        <Tray />
        <div className="ml-[13px] mr-[5px] w-[61px] whitespace-nowrap text-center text-[12px] leading-4 tracking-[-0.35px] text-white">
          <div>12:44 PM</div>
          <div>4/24/2018</div>
        </div>
        <div className="h-full w-[15px] border-l border-[#3e4d60] bg-linear-to-b from-[#95a4b6] via-[#5f7186] to-[#8292a6] shadow-[inset_1px_1px_0_rgba(255,255,255,0.35)]" />
      </div>
    </footer>
  );
}

export default function App() {
  return (
    <div className="flex h-[768px] w-[1366px] flex-col overflow-hidden">
      <BrowserChrome />
      <div className="relative flex h-[637px] shrink-0 overflow-hidden font-[Roboto,sans-serif]">
        <div className="flex w-[1349px] flex-col">
          <TopBar />
          <div className="flex">
            <Sidebar />
            <Page />
          </div>
        </div>
        <ScrollTrack className="h-full" thumb="h-[350px]" />
        <Dialog />
      </div>
      <Taskbar />
    </div>
  );
}
